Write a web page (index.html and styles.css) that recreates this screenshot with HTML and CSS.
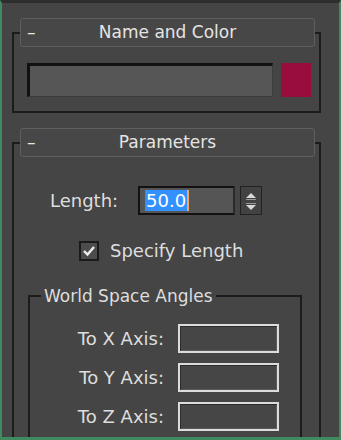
FILE: index.html
```html
<!DOCTYPE html>
<html>
<head>
<meta charset="utf-8">
<link rel="stylesheet" href="styles.css">
</head>
<body>
<div class="panel">
  <section class="rollout first">
    <div class="rollout-head"><span class="minus">–</span><span class="title">Name and Color</span><span></span></div>
    <div class="rollout-frame name-frame">
      <div class="name-row">
        <div class="name-field"></div>
        <div class="swatch"></div>
      </div>
    </div>
  </section>
  <section class="rollout second">
    <div class="rollout-head"><span class="minus">–</span><span class="title">Parameters</span><span></span></div>
    <div class="rollout-frame param-frame">
      <div class="length-row">
        <span class="label">Length:</span>
        <div class="spin-field"><span class="sel">50.0</span><span class="caret"></span></div>
        <div class="spinner">
          <svg width="20" height="26" viewBox="0 0 20 26">
            <path d="M5 10 L10 5 L15 10 Z" fill="#d8d8d8"/>
            <rect x="5" y="11" width="10" height="1" fill="#9a9a9a"/>
            <rect x="5" y="15" width="10" height="1" fill="#9a9a9a"/>
            <path d="M5 17 L10 22 L15 17 Z" fill="#d8d8d8"/>
          </svg>
        </div>
      </div>
      <label class="check-row">
        <span class="checkbox">
          <svg width="16" height="16" viewBox="0 0 16 16"><path d="M3 8 L6.5 11.5 L13 4" fill="none" stroke="#f0f0f0" stroke-width="2.4"/></svg>
        </span>
        <span class="check-label">Specify Length</span>
      </label>
      <fieldset class="group">
        <legend>World Space Angles</legend>
        <div class="axis-grid">
          <span class="axis-label">To X Axis:</span><div class="axis-box"></div>
          <span class="axis-label">To Y Axis:</span><div class="axis-box"></div>
          <span class="axis-label">To Z Axis:</span><div class="axis-box"></div>
        </div>
      </fieldset>
    </div>
  </section>
</div>
</body>
</html>
```
FILE: styles.css
```css
html, body {
  margin: 0;
  padding: 0;
  background: #454545;
}

.panel {
  width: 341px;
  height: 440px;
  box-sizing: border-box;
  overflow: hidden;
  background: #454545;
  border-left: 2px solid #3f8a5e;
  border-right: 2px solid #3f8a5e;
  border-bottom: 3px solid #3f8a5e;
  border-top: 3px solid #2e2e2e;
  font-family: "DejaVu Sans", Verdana, sans-serif;
  font-size: 17px;
  color: #dedede;
}

.rollout {
  margin: 15px 18px 0 10px;
}

.rollout-head {
  position: relative;
  z-index: 1;
  margin: 0 6px 0 8px;
  height: 29px;
  box-sizing: border-box;
  border: 1px solid #5f5f5f;
  border-radius: 3px;
  background: #474747;
  display: grid;
  grid-template-columns: 1fr auto 1fr;
  align-items: center;
}

.minus {
  padding-left: 6px;
  line-height: 1;
  color: #e8e8e8;
}

.title {
  color: #e4e4e4;
  line-height: 1;
}

.rollout-frame {
  margin-top: -15px;
  border: 2px solid #1c1c1c;
}

.name-frame {
  padding: 29px 8px 14px 13px;
}

.name-row {
  display: flex;
  gap: 8px;
}

.name-field {
  flex: 1;
  height: 34px;
  box-sizing: border-box;
  background: #565656;
  border-top: 3px solid #111;
  border-left: 3px solid #111;
  border-right: 1px solid #3c3c3c;
  border-bottom: 1px solid #3c3c3c;
}

.swatch {
  width: 30px;
  height: 34px;
  background: #980d3d;
}

.param-frame {
  padding: 42px 17px 100px 0;
  border-bottom: none;
}

.length-row {
  display: flex;
  align-items: center;
  padding-left: 36px;
  height: 29px;
}

.label {
  font-size: 18px;
  width: 88px;
}

.spin-field {
  width: 97px;
  height: 29px;
  box-sizing: border-box;
  background: #555;
  border: 2px solid #121212;
  border-right-color: #2a2a2a;
  display: flex;
  align-items: center;
  padding-left: 5px;
}

.sel {
  background: #3391ff;
  color: #ffffff;
  font-size: 18px;
  line-height: 21px;
  padding: 0 1px;
}

.caret {
  width: 2px;
  height: 21px;
  background: #f0a868;
}

.spinner {
  margin-left: 5px;
  width: 22px;
  height: 29px;
  box-sizing: border-box;
  border: 1px solid #222;
  background: #424242;
  display: flex;
  align-items: center;
  justify-content: center;
}

.check-row {
  display: flex;
  align-items: center;
  margin-top: 25px;
  padding-left: 65px;
  gap: 11px;
}

.checkbox {
  width: 20px;
  height: 20px;
  box-sizing: border-box;
  border: 2px solid #1a1a1a;
  background: #4c4c4c;
  display: flex;
  align-items: center;
  justify-content: center;
}

.check-label {
  font-size: 18px;
}

.group {
  margin: 25px 0 0 14px;
  padding: 18px 21px 60px 0;
  border: 2px solid #1c1c1c;
  min-width: 0;
}

.group legend {
  margin-left: 11px;
  padding: 0 3px;
  font-size: 17px;
  line-height: 20px;
}

.axis-grid {
  display: grid;
  grid-template-columns: 1fr 101px;
  column-gap: 14px;
  row-gap: 10px;
  align-items: center;
}

.axis-label {
  text-align: right;
  font-size: 18px;
}

.axis-box {
  height: 29px;
  box-sizing: border-box;
  border: 2px solid #dcdcdc;
  background: #464646;
  box-shadow: inset 1px 1px 0 #2c2c2c, inset -1px -1px 0 #5a5a5a;
}
```
